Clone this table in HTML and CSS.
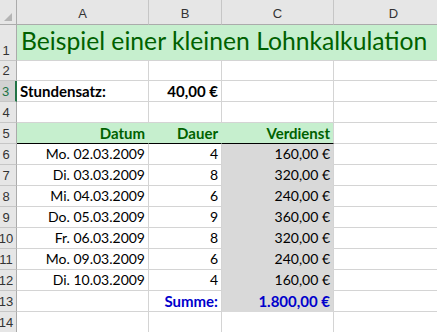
FILE: index.html
```html
<!DOCTYPE html>
<html lang="de">
<head>
<meta charset="utf-8">
<title>Lohnkalkulation</title>
<link rel="stylesheet" href="styles.css">
</head>
<body>
<div class="sheet">
  <div class="corner"><span class="tri"></span></div>
  <div class="ch">A</div><div class="ch">B</div><div class="ch">C</div><div class="ch last">D</div>

  <div class="rh">1</div>
  <div class="c title">Beispiel einer kleinen Lohnkalkulation</div>

  <div class="rh">2</div>
  <div class="c"></div><div class="c"></div><div class="c"></div><div class="c"></div>

  <div class="rh sel">3</div>
  <div class="c b">Stundensatz:</div><div class="c b r">40,00 €</div><div class="c"></div><div class="c"></div>

  <div class="rh">4</div>
  <div class="c"></div><div class="c"></div><div class="c"></div><div class="c"></div>

  <div class="rh">5</div>
  <div class="c hd r">Datum</div><div class="c hd r">Dauer</div><div class="c hd hd-last r">Verdienst</div><div class="c"></div>

  <div class="rh">6</div>
  <div class="c r">Mo. 02.03.2009</div><div class="c r">4</div><div class="c r s">160,00 €</div><div class="c"></div>

  <div class="rh">7</div>
  <div class="c r">Di. 03.03.2009</div><div class="c r">8</div><div class="c r s">320,00 €</div><div class="c"></div>

  <div class="rh">8</div>
  <div class="c r">Mi. 04.03.2009</div><div class="c r">6</div><div class="c r s">240,00 €</div><div class="c"></div>

  <div class="rh">9</div>
  <div class="c r">Do. 05.03.2009</div><div class="c r">9</div><div class="c r s">360,00 €</div><div class="c"></div>

  <div class="rh">10</div>
  <div class="c r">Fr. 06.03.2009</div><div class="c r">8</div><div class="c r s">320,00 €</div><div class="c"></div>

  <div class="rh">11</div>
  <div class="c r">Mo. 09.03.2009</div><div class="c r">6</div><div class="c r s">240,00 €</div><div class="c"></div>

  <div class="rh">12</div>
  <div class="c r">Di. 10.03.2009</div><div class="c r">4</div><div class="c r s">160,00 €</div><div class="c"></div>

  <div class="rh">13</div>
  <div class="c"></div><div class="c r sum">Summe:</div><div class="c r s sum">1.800,00 €</div><div class="c"></div>

  <div class="rh">14</div>
  <div class="c"></div><div class="c"></div><div class="c"></div><div class="c"></div>
</div>
</body>
</html>
```

FILE: styles.css
```css
html, body {
  margin: 0;
  padding: 0;
  background: #ffffff;
  overflow: hidden;
}

.sheet {
  display: grid;
  grid-template-columns: 17px 132px 73px 112px 120px;
  grid-template-rows: 25px 36px 20px repeat(12, 21px);
  font-family: Lato, "Liberation Sans", sans-serif;
  font-size: 14px;
  color: #000;
}

.corner {
  box-sizing: border-box;
  background: #e6e6e6;
  border-right: 1px solid #ababab;
  border-bottom: 1px solid #ababab;
  display: flex;
  justify-content: flex-end;
  align-items: flex-end;
  padding: 0 4px 3px 0;
}

.tri {
  width: 0;
  height: 0;
  border-left: 8px solid transparent;
  border-bottom: 8px solid #b4b4b4;
}

.ch {
  box-sizing: border-box;
  background: #e6e6e6;
  border-right: 1px solid #c6c6c6;
  border-bottom: 1px solid #ababab;
  display: flex;
  justify-content: center;
  align-items: flex-end;
  padding-bottom: 3px;
  font-family: "Liberation Sans", Arial, sans-serif;
  font-size: 13px;
  color: #333;
}

.rh {
  box-sizing: border-box;
  background: #e6e6e6;
  border-right: 1px solid #ababab;
  border-bottom: 1px solid #c6c6c6;
  display: flex;
  justify-content: center;
  align-items: flex-end;
  padding: 0 4px 2px 0;
  font-family: "Liberation Sans", Arial, sans-serif;
  font-size: 13px;
  color: #333;
  overflow: hidden;
  white-space: nowrap;
}

.rh.sel {
  background: #d2d2d2;
  color: #217346;
  border-right: 2px solid #217346;
}

.c {
  box-sizing: border-box;
  border-right: 1px solid #d4d4d4;
  border-bottom: 1px solid #d4d4d4;
  display: flex;
  align-items: flex-end;
  padding: 0 3px 3px 3px;
  line-height: 1;
  white-space: nowrap;
  overflow: hidden;
}

.r {
  justify-content: flex-end;
}

.b {
  font-weight: bold;
  font-size: 15px;
  padding-bottom: 2px;
}

.title {
  grid-column: 2 / 6;
  background: #c6efce;
  color: #006100;
  font-size: 24.7px;
  padding: 0 0 6px 4px;
  border-right: none;
}

.hd {
  background: #c6efce;
  color: #006100;
  font-weight: bold;
  font-size: 15px;
  padding-bottom: 2px;
  border-right-color: #c6efce;
  border-bottom: 1px solid #000;
}

.hd-last {
  border-right-color: #d4d4d4;
}

.s {
  background: #d9d9d9;
  border-bottom-color: #d9d9d9;
}

.sum {
  color: #0000cc;
  font-weight: bold;
  font-size: 15px;
  padding-bottom: 2px;
}
```
